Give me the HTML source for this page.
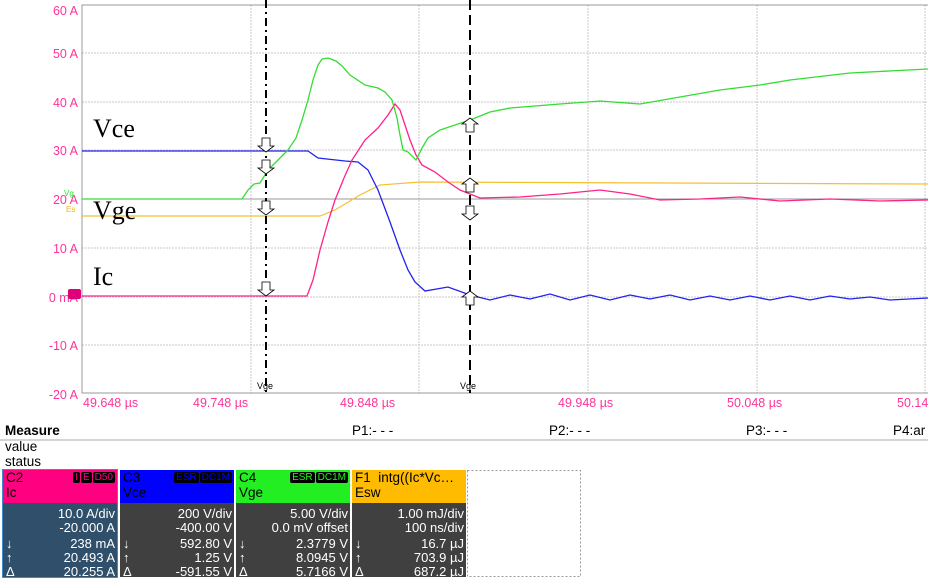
<!DOCTYPE html><html><head><style>
body{margin:0;width:928px;height:579px;background:#fff;overflow:hidden;font-family:"Liberation Sans",sans-serif;position:relative}
svg{position:absolute;left:0;top:0}
.b{position:absolute;top:470px;width:114px;height:107px;font-size:13.5px}
.h{height:33px;padding:0 3px;line-height:15px;position:relative}
.d{background:#404040;color:#fff;height:74px;position:relative;font-size:13px}
.r{position:absolute;right:2px;text-align:right}
.l{position:absolute;left:3px}
.tag{position:absolute;top:2px;right:2px;font-size:10px;line-height:11px}
.tag span{background:#000;padding:0 2px;margin-left:1px;border-radius:2px}
</style></head><body>
<svg width="928" height="579" xmlns="http://www.w3.org/2000/svg">
<g stroke="#c8c8c8" stroke-width="1" stroke-dasharray="2,1">
<line x1="82" y1="53" x2="928" y2="53"/><line x1="82" y1="102" x2="928" y2="102"/><line x1="82" y1="150" x2="928" y2="150"/><line x1="82" y1="248" x2="928" y2="248"/><line x1="82" y1="297" x2="928" y2="297"/><line x1="82" y1="345" x2="928" y2="345"/>
<line x1="251" y1="5" x2="251" y2="393"/><line x1="419" y1="5" x2="419" y2="393"/><line x1="588" y1="5" x2="588" y2="393"/><line x1="757" y1="5" x2="757" y2="393"/><line x1="925" y1="5" x2="925" y2="393"/>
</g>
<line x1="82" y1="199" x2="928" y2="199" stroke="#999"/>
<rect x="82" y="5" width="850" height="388" fill="none" stroke="#999"/>
<g fill="#ff3399" font-size="12.5" text-anchor="end">
<text x="78" y="15">60 A</text><text x="78" y="58">50 A</text><text x="78" y="107">40 A</text><text x="78" y="155">30 A</text><text x="78" y="204">20 A</text><text x="78" y="253">10 A</text><text x="78" y="302">0 mA</text><text x="78" y="350">-10 A</text><text x="78" y="399">-20 A</text>
</g>
<g fill="#ff3399" font-size="12.5">
<text x="83" y="407">49.648 µs</text><text x="193" y="407">49.748 µs</text><text x="340" y="407">49.848 µs</text><text x="558" y="407">49.948 µs</text><text x="727" y="407">50.048 µs</text><text x="897" y="407">50.14</text>
</g>
<text x="64" y="196" fill="#33dd33" font-size="8">Vg</text><text x="66" y="212" fill="#f5b800" font-size="8">Es</text>
<rect x="68" y="289" width="13" height="10" rx="2" fill="#e0007a"/>
<polyline fill="none" stroke="#f5c030" stroke-width="1.2" points="82,216 320,216 335,210 360,195 380,185 420,182 928,184"/>
<polyline fill="none" stroke="#2222ee" stroke-width="1.3" points="82,151 308,151 318,158 345,161 358,162 368,170 378,190 390,222 400,250 408,270 415,282 425,291 448,287 470,295 490,300 510,295 530,299 550,294 570,300 590,295 610,300 630,295 650,299 670,295 690,300 710,296 730,300 750,296 770,300 790,296 810,300 830,296 850,299 870,297 890,300 928,298"/>
<polyline fill="none" stroke="#ff2288" stroke-width="1.3" points="82,296 307,296 313,280 320,250 328,222 335,200 344,178 352,160 365,140 378,128 388,115 395,104 400,110 405,125 410,140 416,155 422,165 435,172 448,182 460,190 480,198 520,197 560,194 600,190 630,194 660,200 700,199 740,197 780,201 830,199 880,201 928,200"/>
<polyline fill="none" stroke="#33dd33" stroke-width="1.3" points="82,199 242,199 248,190 254,184 260,183 268,170 278,160 288,150 296,138 302,120 308,100 313,80 318,65 322,59 328,58 336,61 342,66 350,75 365,85 378,88 385,92 392,100 397,118 400,135 403,150 408,152 416,160 422,148 428,138 440,130 455,125 470,120 490,112 510,108 560,104 600,101 640,104 680,97 720,90 760,85 790,80 850,73 928,69"/>
<line x1="266" y1="0" x2="266" y2="393" stroke="#000" stroke-width="2" stroke-dasharray="8,4,2,4"/>
<line x1="470" y1="0" x2="470" y2="393" stroke="#000" stroke-width="2" stroke-dasharray="10,5"/>
<g fill="#fff" stroke="#000" stroke-width="0.8">
<path d="M262,138h8v8h4l-8,6l-8,-6h4z"/><path d="M262,160h8v8h4l-8,6l-8,-6h4z"/><path d="M262,201h8v8h4l-8,6l-8,-6h4z"/><path d="M262,282h8v8h4l-8,6l-8,-6h4z"/>
<path d="M466,132h8v-8h4l-8,-6l-8,6h4z"/><path d="M466,192h8v-8h4l-8,-6l-8,6h4z"/><path d="M466,206h8v8h4l-8,6l-8,-6h4z"/><path d="M466,305h8v-8h4l-8,-6l-8,6h4z"/>
</g>
<text x="257" y="389" font-size="9">Vge</text><text x="460" y="389" font-size="9">Vge</text>
<g font-family="Liberation Serif" font-size="26"><text x="93" y="137">Vce</text><text x="93" y="219">Vge</text><text x="93" y="285">Ic</text></g>
<line x1="0" y1="440" x2="928" y2="440" stroke="#aaa"/>
<rect x="467.5" y="470.5" width="113" height="106" fill="none" stroke="#999" stroke-dasharray="2,2"/>
</svg>
<div style="position:absolute;left:5px;top:423px;font-size:13.5px;font-weight:bold">Measure</div>
<div style="position:absolute;left:352px;top:423px;font-size:13.5px">P1:- - -</div>
<div style="position:absolute;left:549px;top:423px;font-size:13.5px">P2:- - -</div>
<div style="position:absolute;left:746px;top:423px;font-size:13.5px">P3:- - -</div>
<div style="position:absolute;left:893px;top:423px;font-size:13.5px">P4:ar</div>
<div style="position:absolute;left:5px;top:439px;font-size:13.5px">value</div>
<div style="position:absolute;left:5px;top:454px;font-size:13.5px">status</div>

<div class="b" style="left:3px;outline:1px solid #4488cc"><div class="h" style="background:#ff0080;color:#000">C2<br>Ic<div class="tag"><span style="color:#ff0080">I</span><span style="color:#ff0080">E</span><span style="color:#ff0080">D50</span></div></div>
<div class="d" style="background:#2f4f6a"><div class="r" style="top:3px">10.0 A/div</div><div class="r" style="top:17px">-20.000 A</div><div class="l" style="top:33px">↓</div><div class="r" style="top:33px">238 mA</div><div class="l" style="top:47px">↑</div><div class="r" style="top:47px">20.493 A</div><div class="l" style="top:61px">Δ</div><div class="r" style="top:61px">20.255 A</div></div></div>

<div class="b" style="left:120px"><div class="h" style="background:#0000ff;color:#000">C3<br>Vce<div class="tag"><span style="color:#0000ff">ESR</span><span style="color:#0000ff">DC1M</span></div></div>
<div class="d"><div class="r" style="top:3px">200 V/div</div><div class="r" style="top:17px">-400.00 V</div><div class="l" style="top:33px">↓</div><div class="r" style="top:33px">592.80 V</div><div class="l" style="top:47px">↑</div><div class="r" style="top:47px">1.25 V</div><div class="l" style="top:61px">Δ</div><div class="r" style="top:61px">-591.55 V</div></div></div>

<div class="b" style="left:236px"><div class="h" style="background:#22ee22;color:#000">C4<br>Vge<div class="tag"><span style="color:#22ee22">ESR</span><span style="color:#22ee22">DC1M</span></div></div>
<div class="d"><div class="r" style="top:3px">5.00 V/div</div><div class="r" style="top:17px">0.0 mV offset</div><div class="l" style="top:33px">↓</div><div class="r" style="top:33px">2.3779 V</div><div class="l" style="top:47px">↑</div><div class="r" style="top:47px">8.0945 V</div><div class="l" style="top:61px">Δ</div><div class="r" style="top:61px">5.7166 V</div></div></div>

<div class="b" style="left:352px"><div class="h" style="background:#ffbb00;color:#000">F1&nbsp; intg((Ic*Vc…<br>Esw</div>
<div class="d"><div class="r" style="top:3px">1.00 mJ/div</div><div class="r" style="top:17px">100 ns/div</div><div class="l" style="top:33px">↓</div><div class="r" style="top:33px">16.7 µJ</div><div class="l" style="top:47px">↑</div><div class="r" style="top:47px">703.9 µJ</div><div class="l" style="top:61px">Δ</div><div class="r" style="top:61px">687.2 µJ</div></div></div>
</body></html>
